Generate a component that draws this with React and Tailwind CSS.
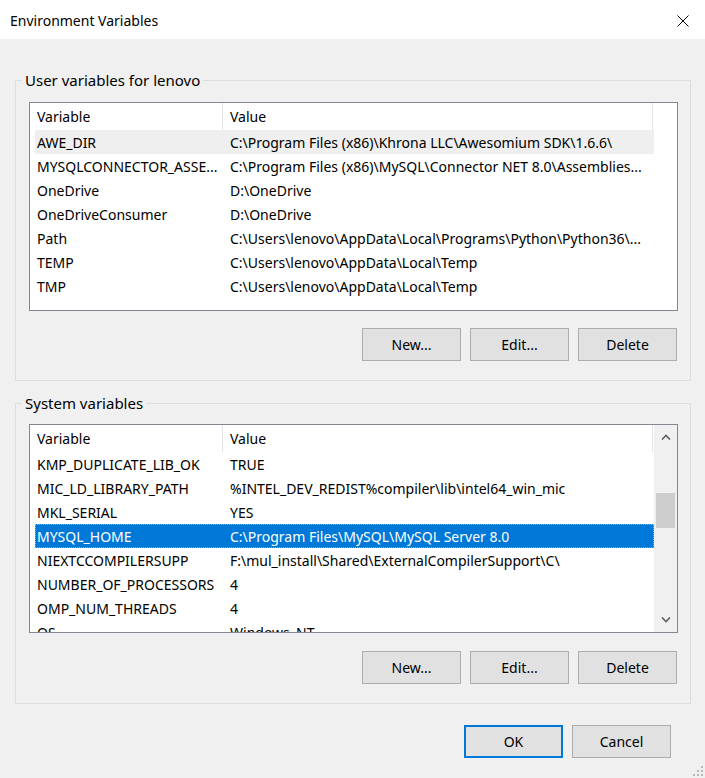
import React from "react";

const userVars = [
  ["AWE_DIR", "C:\\Program Files (x86)\\Khrona LLC\\Awesomium SDK\\1.6.6\\"],
  ["MYSQLCONNECTOR_ASSE...", "C:\\Program Files (x86)\\MySQL\\Connector NET 8.0\\Assemblies..."],
  ["OneDrive", "D:\\OneDrive"],
  ["OneDriveConsumer", "D:\\OneDrive"],
  ["Path", "C:\\Users\\lenovo\\AppData\\Local\\Programs\\Python\\Python36\\..."],
  ["TEMP", "C:\\Users\\lenovo\\AppData\\Local\\Temp"],
  ["TMP", "C:\\Users\\lenovo\\AppData\\Local\\Temp"],
];

const systemVars = [
  ["KMP_DUPLICATE_LIB_OK", "TRUE"],
  ["MIC_LD_LIBRARY_PATH", "%INTEL_DEV_REDIST%compiler\\lib\\intel64_win_mic"],
  ["MKL_SERIAL", "YES"],
  ["MYSQL_HOME", "C:\\Program Files\\MySQL\\MySQL Server 8.0"],
  ["NIEXTCCOMPILERSUPP", "F:\\mul_install\\Shared\\ExternalCompilerSupport\\C\\"],
  ["NUMBER_OF_PROCESSORS", "4"],
  ["OMP_NUM_THREADS", "4"],
  ["OS", "Windows_NT"],
];

function Button({ children, primary }) {
  return (
    <button
      className={`w-[99px] h-[33px] bg-[#e1e1e1] flex items-center justify-center ${
        primary ? "border-2 border-[#0078d7]" : "border border-[#adadad]"
      }`}
    >
      {children}
    </button>
  );
}

function Header() {
  return (
    <div className="flex h-[27px] w-[623px] items-center">
      <div className="w-[193px] h-full flex items-center pl-[7px] border-r border-[#e5e5e5]">
        Variable
      </div>
      <div className="w-[430px] h-full flex items-center pl-[7px] border-r border-[#e5e5e5]">
        Value
      </div>
    </div>
  );
}

function Row({ name, value, state }) {
  let cls = "";
  if (state === "hover") cls = "bg-[#efefef]";
  if (state === "selected")
    cls = "bg-[#0078d7] text-white outline outline-1 outline-dotted outline-[#e3a04f] -outline-offset-1";
  return (
    <div className={`flex h-[24px] w-[619px] ml-[5px] items-center ${cls}`}>
      <div className="w-[188px] pl-[2px] whitespace-nowrap overflow-hidden">{name}</div>
      <div className="w-[431px] pl-[7px] whitespace-nowrap overflow-hidden">{value}</div>
    </div>
  );
}

function Chevron({ down }) {
  return (
    <svg width="10" height="6" viewBox="0 0 10 6" className={down ? "rotate-180" : ""}>
      <path d="M1 5.5 L5 1.5 L9 5.5" fill="none" stroke="#606060" strokeWidth="1.6" />
    </svg>
  );
}

function Group({ title, children }) {
  return (
    <fieldset className="w-[676px] ml-[15px] border border-[#dcdcdc] pb-[19px]">
      <legend className="ml-[6px] px-[3px] leading-[20px] text-[15px]">{title}</legend>
      {children}
    </fieldset>
  );
}

function Buttons({ top }) {
  return (
    <div className={`flex justify-end gap-[9px] mr-[13px] ${top}`}>
      <Button>New...</Button>
      <Button>Edit...</Button>
      <Button>Delete</Button>
    </div>
  );
}

export default function App() {
  return (
    <div
      className="w-[705px] h-[778px] bg-[#f0f0f0] text-black text-[14px] flex flex-col overflow-hidden relative"
      style={{ fontFamily: '"Noto Sans", "Open Sans", sans-serif' }}
    >
      {/* title bar */}
      <div className="h-[39px] bg-white flex items-center justify-between pl-[10px] pr-[16px] pt-[2px]">
        <span className="text-[14px]">Environment Variables</span>
        <svg width="12" height="12" viewBox="0 0 12 12">
          <path d="M0.5 0.5 L11.5 11.5 M11.5 0.5 L0.5 11.5" stroke="#000" strokeWidth="1" />
        </svg>
      </div>

      <div className="mt-[31px]">
        <Group title="User variables for lenovo">
          <div className="ml-[13px] mt-[12px] w-[649px] h-[209px] bg-white border border-[#828790] overflow-hidden">
            <Header />
            {userVars.map(([n, v], i) => (
              <Row key={n} name={n} value={v} state={i === 0 ? "hover" : ""} />
            ))}
          </div>
          <Buttons top="mt-[17px]" />
        </Group>
      </div>

      <div className="mt-[12px]">
        <Group title="System variables">
          <div className="ml-[13px] mt-[11px] w-[649px] h-[209px] bg-white border border-[#828790] overflow-hidden flex">
            <div className="w-[624px] h-full overflow-hidden">
              <Header />
              {systemVars.map(([n, v]) => (
                <Row key={n} name={n} value={v} state={n === "MYSQL_HOME" ? "selected" : ""} />
              ))}
            </div>
            <div className="w-[23px] h-full bg-[#f0f0f0] flex flex-col items-center">
              <div className="h-[24px] flex items-center justify-center">
                <Chevron />
              </div>
              <div className="w-[19px] h-[35px] bg-[#cdcdcd] mt-[44px] ml-[-1px]" />
              <div className="flex-1" />
              <div className="h-[24px] flex items-center justify-center">
                <Chevron down />
              </div>
            </div>
          </div>
          <Buttons top="mt-[18px]" />
        </Group>
      </div>

      <div className="flex justify-end gap-[9px] mr-[34px] mt-[21px]">
        <Button primary>OK</Button>
        <Button>Cancel</Button>
      </div>

      {/* resize grip */}
      <svg width="12" height="12" viewBox="0 0 12 12" className="absolute right-[1px] bottom-[1px]">
        {[[9, 1], [9, 5], [5, 5], [9, 9], [5, 9], [1, 9]].map(([x, y]) => (
          <rect key={`${x}-${y}`} x={x} y={y} width="2" height="2" fill="#b8b8b8" />
        ))}
      </svg>
    </div>
  );
}
